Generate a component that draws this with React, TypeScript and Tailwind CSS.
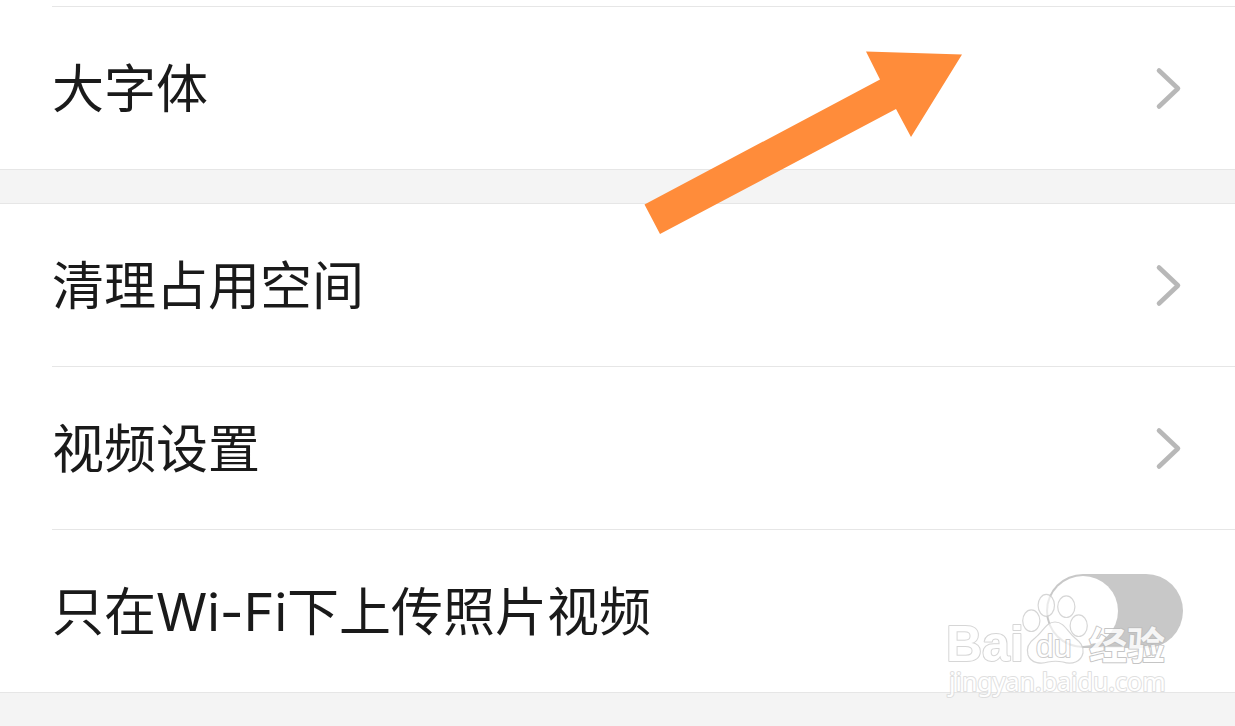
import { useState } from "react";

function Chevron() {
  return (
    <svg className="h-12 w-8 shrink-0" viewBox="0 0 32 48" fill="none" aria-hidden="true">
      <path d="M8 6.5l19 18L8 42.5" stroke="#b8b8b8" strokeWidth="4.6" strokeLinecap="round" strokeLinejoin="round" />
    </svg>
  );
}

function LinkRow({ label }: { label: string }) {
  return (
    <button type="button" className="flex h-[162px] w-full items-center justify-between pr-[52px] text-left">
      <span className="pt-1">{label}</span>
      <Chevron />
    </button>
  );
}

function Watermark() {
  return (
    <svg
      className="pointer-events-none absolute right-[55px] -bottom-3 h-[120px] w-[240px] opacity-85"
      viewBox="940 584 240 120"
      aria-hidden="true"
    >
      <g fill="#fff" fillOpacity="0.75" stroke="#d0d0d0" strokeWidth="1.2">
        <ellipse cx="1031.3" cy="620.7" rx="8.6" ry="10.8" />
        <ellipse cx="1046.3" cy="605.3" rx="8.2" ry="11" />
        <ellipse cx="1066.3" cy="606.7" rx="8.6" ry="10.8" />
        <ellipse cx="1078.7" cy="625.7" rx="8.6" ry="10.8" />
        <path d="M1055 622C1046 622 1043 632 1035 638C1028 643 1026 648 1028 655C1031 664 1042 664 1048 662C1053 661 1058 661 1063 662C1072 665 1081 662 1083 653C1084 646 1080 642 1075 638C1067 631 1064 622 1055 622Z" />
      </g>
      <g fill="#fff" stroke="#cfcfcf" strokeWidth="2" paintOrder="stroke" strokeLinejoin="round">
        <text x="946" y="661" className="font-['Liberation_Sans'] text-[50px] font-bold">Bai</text>
        <text x="1036" y="657" stroke="#c4c4c4" className="font-['Liberation_Sans'] text-[32px]">du</text>
        <text x="1089" y="659" stroke="#bcbcbc" className="font-['Noto_Sans_CJK_SC'] text-[38px] font-bold">经验</text>
        <text x="949" y="691" stroke="#dadada" className="font-['Noto_Sans'] text-[25px]">jingyan.baidu.com</text>
      </g>
    </svg>
  );
}

export default function App() {
  const [wifiOnly, setWifiOnly] = useState(false);

  return (
    <main className="min-h-screen overflow-hidden bg-[#f4f4f4] font-['Inter','Noto_Sans_CJK_SC',sans-serif] text-[52px] leading-[76px] text-[#1a1a1a]">
      <section className="relative border-b border-[#e6e6e6] bg-white pt-[6px] pl-[52px]">
        <div className="border-t border-[#e6e6e6]">
          <LinkRow label="大字体" />
        </div>
        {/* Pointer towards the row's chevron */}
        <svg
          className="pointer-events-none absolute top-[50px] right-[271px] z-10 h-[186px] w-[322px]"
          viewBox="642 50 322 186"
          aria-hidden="true"
        >
          <path d="M644.5 204.5L880 79.5L866 51.5L962 54.5L911 137L896 109L660 234Z" fill="#ff8c3a" />
        </svg>
      </section>

      <section className="mt-[33px] border-y border-[#e6e6e6] bg-white pl-[52px]">
        <LinkRow label="清理占用空间" />
        <div className="border-y border-[#e6e6e6]">
          <LinkRow label="视频设置" />
        </div>
        <div className="relative flex h-[162px] items-center justify-between pr-[52px]">
          <label htmlFor="wifi-only" className="pt-1">只在Wi-Fi下上传照片视频</label>
          <input
            id="wifi-only"
            type="checkbox"
            role="switch"
            checked={wifiOnly}
            onChange={(e) => setWifiOnly(e.target.checked)}
            className="h-[74px] w-[137px] shrink-0 cursor-pointer appearance-none rounded-full bg-[#c8c8c8] p-[2px] before:block before:size-[70px] before:rounded-full before:bg-white checked:bg-orange-400 checked:before:ml-auto"
          />
          <Watermark />
        </div>
      </section>
    </main>
  );
}
